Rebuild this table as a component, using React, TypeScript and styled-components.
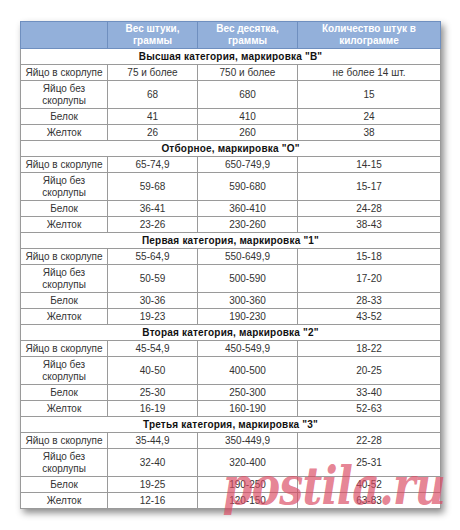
import React from "react";
import styled, { createGlobalStyle } from "styled-components";

const Global = createGlobalStyle`
  html, body { margin: 0; padding: 0; background: #ffffff; }
  body { font-family: "Liberation Sans", Arial, sans-serif; }
`;

const Page = styled.div`
  position: relative;
  width: 460px;
  height: 530px;
  padding: 21px 0 0 20px;
  box-sizing: border-box;
  overflow: hidden;
`;

const Table = styled.table`
  border-collapse: collapse;
  width: 420px;
  table-layout: fixed;
  font-size: 10px;
  color: #333333;
  box-shadow: 3px 4px 7px rgba(0, 0, 0, 0.45);
  border: 1px solid #8a8a8a;
`;

const HeadCell = styled.th`
  background: #93b0da;
  color: #ffffff;
  font-weight: bold;
  font-size: 10px;
  line-height: 12px;
  height: 26px;
  padding: 0 2px;
  text-align: center;
  vertical-align: middle;
  border: 1px solid #6f8fbf;
`;

const CatCell = styled.td`
  font-weight: bold;
  color: #111;
  text-align: center;
  height: 15px;
  line-height: 12px;
  padding: 0;
  border: 1px solid #9a9a9a;
  letter-spacing: 0.2px;
`;

const Cell = styled.td<{ $tall?: boolean }>`
  text-align: center;
  vertical-align: middle;
  padding: 0 2px;
  line-height: 12px;
  height: ${(p) => (p.$tall ? "27px" : "15px")};
  border: 1px solid #9a9a9a;
`;

const Watermark = styled.div`
  position: absolute;
  right: 15px;
  top: 456px;
  font-family: "DejaVu Serif", "Liberation Serif", serif;
  font-weight: bold;
  font-style: italic;
  font-size: 52px;
  line-height: 60px;
  color: rgba(218, 72, 96, 0.68);
  transform: scaleX(0.82);
  transform-origin: right top;
  letter-spacing: -1px;
  pointer-events: none;
  white-space: nowrap;
`;

type Group = { title: string; rows: string[][] };

const labels = ["Яйцо в скорлупе", "Яйцо без скорлупы", "Белок", "Желток"];

const groups: Group[] = [
  {
    title: 'Высшая категория, маркировка "В"',
    rows: [
      ["75 и более", "750 и более", "не более 14 шт."],
      ["68", "680", "15"],
      ["41", "410", "24"],
      ["26", "260", "38"],
    ],
  },
  {
    title: 'Отборное, маркировка "О"',
    rows: [
      ["65-74,9", "650-749,9", "14-15"],
      ["59-68", "590-680", "15-17"],
      ["36-41", "360-410", "24-28"],
      ["23-26", "230-260", "38-43"],
    ],
  },
  {
    title: 'Первая категория, маркировка "1"',
    rows: [
      ["55-64,9", "550-649,9", "15-18"],
      ["50-59", "500-590", "17-20"],
      ["30-36", "300-360", "28-33"],
      ["19-23", "190-230", "43-52"],
    ],
  },
  {
    title: 'Вторая категория, маркировка "2"',
    rows: [
      ["45-54,9", "450-549,9", "18-22"],
      ["40-50", "400-500", "20-25"],
      ["25-30", "250-300", "33-40"],
      ["16-19", "160-190", "52-63"],
    ],
  },
  {
    title: 'Третья категория, маркировка "3"',
    rows: [
      ["35-44,9", "350-449,9", "22-28"],
      ["32-40", "320-400", "25-31"],
      ["19-25", "190-250", "40-52"],
      ["12-16", "120-150", "63-83"],
    ],
  },
];

export default function App() {
  return (
    <Page>
      <Global />
      <Table>
        <colgroup>
          <col style={{ width: 87 }} />
          <col style={{ width: 90 }} />
          <col style={{ width: 100 }} />
          <col style={{ width: 143 }} />
        </colgroup>
        <thead>
          <tr>
            <HeadCell />
            <HeadCell>
              Вес штуки,
              <br />
              граммы
            </HeadCell>
            <HeadCell>
              Вес десятка,
              <br />
              граммы
            </HeadCell>
            <HeadCell>
              Количество штук в
              <br />
              килограмме
            </HeadCell>
          </tr>
        </thead>
        <tbody>
          {groups.map((g) => (
            <React.Fragment key={g.title}>
              <tr>
                <CatCell colSpan={4}>{g.title}</CatCell>
              </tr>
              {g.rows.map((r, i) => (
                <tr key={i}>
                  <Cell $tall={i === 1}>
                    {i === 1 ? (
                      <>
                        Яйцо без
                        <br />
                        скорлупы
                      </>
                    ) : (
                      labels[i]
                    )}
                  </Cell>
                  {r.map((v, j) => (
                    <Cell key={j} $tall={i === 1}>
                      {v}
                    </Cell>
                  ))}
                </tr>
              ))}
            </React.Fragment>
          ))}
        </tbody>
      </Table>
      <Watermark>postila.ru</Watermark>
    </Page>
  );
}
